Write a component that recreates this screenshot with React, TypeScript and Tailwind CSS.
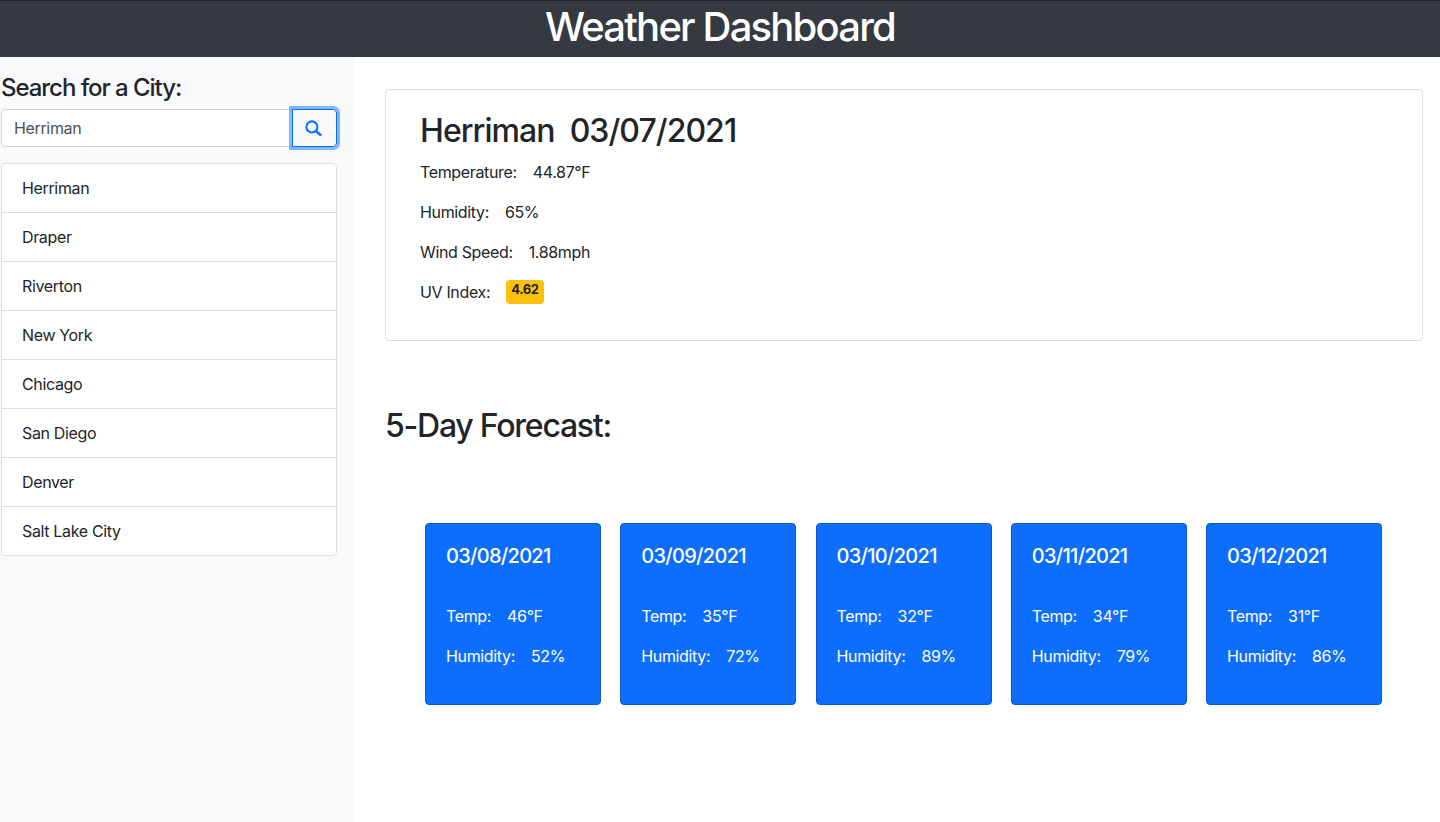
import { useState } from 'react'

const cities = ['Herriman', 'Draper', 'Riverton', 'New York', 'Chicago', 'San Diego', 'Denver', 'Salt Lake City']

const forecast = [
  { date: '03/08/2021', temp: '46', humidity: '52' },
  { date: '03/09/2021', temp: '35', humidity: '72' },
  { date: '03/10/2021', temp: '32', humidity: '89' },
  { date: '03/11/2021', temp: '34', humidity: '79' },
  { date: '03/12/2021', temp: '31', humidity: '86' },
]

export default function App() {
  const [city, setCity] = useState('Herriman')

  return (
    <div className="h-[822px] overflow-hidden bg-white font-['Inter',sans-serif] text-[#212529]">
      {/* Header */}
      <header className="flex h-[57px] items-center justify-center border-t border-[#23272b] bg-[#343a40]">
        <h1 className="-mt-1 text-[40px] leading-[48px] font-[550] tracking-[-1.8px] text-white">Weather Dashboard</h1>
      </header>

      <div className="flex h-[765px]">
        {/* Sidebar */}
        <aside className="w-[353px] bg-[#f8f9fa] pl-px pr-4 pt-4">
          <h2 className="text-2xl leading-[29px] font-[550] tracking-[-1.05px]">Search for a City:</h2>
          <form className="mt-[7px] flex h-[38px]" onSubmit={(e) => e.preventDefault()}>
            <input
              value={city}
              onChange={(e) => setCity(e.target.value)}
              className="min-w-0 flex-1 rounded-l-[4px] border border-[#ced4da] bg-white px-3 text-base tracking-[-0.35px] text-[#495057] outline-none"
            />
            <button className="-ml-px flex w-[45px] items-center justify-center rounded-r-[4px] border border-[#0d6efd] pr-[3px] text-[#0d6efd] shadow-[0_0_0_3px_rgba(13,110,253,0.5)]">
              <svg width="17" height="17" viewBox="0 0 16 16" fill="none" stroke="currentColor">
                <circle cx="6.5" cy="6.5" r="5.2" strokeWidth="1.9" />
                <path d="M11 11l3.4 2.8" strokeWidth="2.4" strokeLinecap="round" />
              </svg>
            </button>
          </form>
          <ul className="mt-4 rounded-[4px] border border-[#dfdfdf] bg-white">
            {cities.map((name) => (
              <li key={name} className="h-[49px] border-b border-[#dfdfdf] px-5 py-2 text-base leading-[32px] tracking-[-0.35px] last:h-[48px] last:border-b-0">
                {name}
              </li>
            ))}
          </ul>
        </aside>

        {/* Main content */}
        <main className="flex-1 pl-8 pr-[17px] pt-8">
          <section className="h-[252px] rounded-[4px] border border-[#dfdfdf] px-[34px] pt-[17px]">
            <h2 className="text-[32px] leading-[48px] font-[550] tracking-[-0.95px]">Herriman&nbsp; 03/07/2021</h2>
            <p className="mt-[5px] text-base leading-6 tracking-[-0.35px]">Temperature:<span className="ml-4">44.87°F</span></p>
            <p className="mt-4 text-base leading-6 tracking-[-0.35px]">Humidity:<span className="ml-4">65%</span></p>
            <p className="mt-4 text-base leading-6 tracking-[-0.35px]">Wind Speed:<span className="ml-4">1.88mph</span></p>
            <p className="mt-4 flex text-base leading-6 tracking-[-0.35px]">
              UV Index:
              <span className="ml-4 h-6 rounded-[4px] bg-[#ffc107] px-[5px] pt-px text-[13px] leading-4 font-bold tracking-[-0.35px]">4.62</span>
            </p>
          </section>

          <h2 className="mt-[66px] text-[32px] leading-[38px] font-[550] tracking-[-1.25px]">5-Day Forecast:</h2>

          <div className="mt-[78px] flex gap-[19.25px] pl-10">
            {forecast.map((day) => (
              <div key={day.date} className="h-[182px] w-[176px] rounded-[4px] border border-[#0a58ca] bg-[#0d6efd] px-5 pt-4 text-white">
                <h3 className="text-xl leading-8 font-[550] tracking-[-0.7px]">{day.date}</h3>
                <p className="mt-[32px] text-base leading-6 tracking-[-0.35px]">Temp:<span className="ml-4">{day.temp}°F</span></p>
                <p className="mt-4 text-base leading-6 tracking-[-0.35px]">Humidity:<span className="ml-4">{day.humidity}%</span></p>
              </div>
            ))}
          </div>
        </main>
      </div>
    </div>
  )
}
